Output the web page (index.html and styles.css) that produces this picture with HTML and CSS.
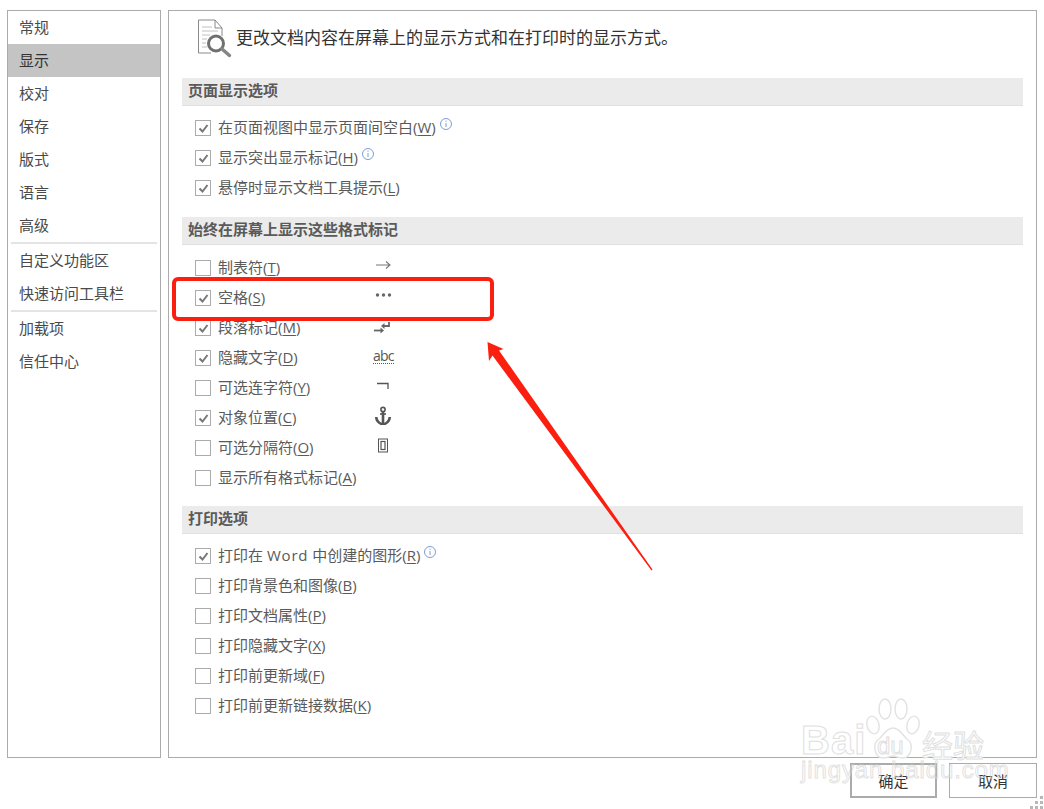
FILE: index.html
```html
<!DOCTYPE html>
<html lang="zh-CN">
<head>
<meta charset="utf-8">
<title>Word 选项 - 显示</title>
<link rel="stylesheet" href="styles.css">
</head>
<body>
<div class="app">
  <div class="panes">
    <nav class="side">
      <div class="nav-item">常规</div>
      <div class="nav-item active">显示</div>
      <div class="nav-item">校对</div>
      <div class="nav-item">保存</div>
      <div class="nav-item">版式</div>
      <div class="nav-item">语言</div>
      <div class="nav-item">高级</div>
      <div class="nav-sep"></div>
      <div class="nav-item">自定义功能区</div>
      <div class="nav-item">快速访问工具栏</div>
      <div class="nav-sep"></div>
      <div class="nav-item">加载项</div>
      <div class="nav-item">信任中心</div>
    </nav>
    <main class="main">
      <header class="head">
        <svg class="head-icon" width="36" height="40" viewBox="0 0 36 40">
          <path d="M1.5 2H18L25 10V18M18 2V10H25M14 35H1.5V2" fill="#fff" stroke="#8a8a8a"/>
          <path d="M5 9H15M5 13H21M5 17H13M5 21H10M5 25H9M5 29H10" stroke="#c0c0c0" fill="none"/>
          <circle cx="19" cy="25.5" r="7.5" fill="#fff" stroke="#707070" stroke-width="3"/>
          <path d="M25 31L32.5 37.5" stroke="#858585" stroke-width="3.4" stroke-linecap="round"/>
        </svg>
        <span class="head-text">更改文档内容在屏幕上的显示方式和在打印时的显示方式。</span>
      </header>

      <h2 class="bar">页面显示选项</h2>
      <div class="opts first">
        <div class="row"><span class="cb on"><svg width="13" height="13" viewBox="0 0 13 13"><path d="M2.5 6.5L5.5 9.5L10.5 3" class="tick"/></svg></span><span class="lbl">在页面视图中显示页面间空白(<u>W</u>)</span><svg class="info" width="14" height="14" viewBox="0 0 14 14"><circle cx="7" cy="7" r="5.5"/><path d="M7 6v4M7 3.6v1.2"/></svg></div>
        <div class="row"><span class="cb on"><svg width="13" height="13" viewBox="0 0 13 13"><path d="M2.5 6.5L5.5 9.5L10.5 3" class="tick"/></svg></span><span class="lbl">显示突出显示标记(<u>H</u>)</span><svg class="info" width="14" height="14" viewBox="0 0 14 14"><circle cx="7" cy="7" r="5.5"/><path d="M7 6v4M7 3.6v1.2"/></svg></div>
        <div class="row"><span class="cb on"><svg width="13" height="13" viewBox="0 0 13 13"><path d="M2.5 6.5L5.5 9.5L10.5 3" class="tick"/></svg></span><span class="lbl">悬停时显示文档工具提示(<u>L</u>)</span></div>
      </div>

      <h2 class="bar gap-a">始终在屏幕上显示这些格式标记</h2>
      <div class="opts second">
        <div class="row"><span class="cb"></span><span class="lbl wide">制表符(<u>T</u>)</span><svg class="sym" width="20" height="14" viewBox="0 0 20 14"><path d="M4 7H18M14 3.5L18 7L14 10.5" fill="none" stroke="#777" stroke-width="1.1"/></svg></div>
        <div class="row"><span class="cb on"><svg width="13" height="13" viewBox="0 0 13 13"><path d="M2.5 6.5L5.5 9.5L10.5 3" class="tick"/></svg></span><span class="lbl wide">空格(<u>S</u>)</span><svg class="sym" width="20" height="14" viewBox="0 0 20 14"><circle cx="5.5" cy="7" r="1.7" fill="#666"/><circle cx="11.5" cy="7" r="1.7" fill="#666"/><circle cx="17.5" cy="7" r="1.7" fill="#666"/></svg></div>
        <div class="row"><span class="cb on"><svg width="13" height="13" viewBox="0 0 13 13"><path d="M2.5 6.5L5.5 9.5L10.5 3" class="tick"/></svg></span><span class="lbl wide">段落标记(<u>M</u>)</span><svg class="sym" width="20" height="20" viewBox="0 0 20 20"><path d="M17 7V11H11" fill="none" stroke="#666" stroke-width="1.8"/><path d="M9 11L12.5 8V14Z" fill="#666"/><path d="M2 15.5H9" fill="none" stroke="#666" stroke-width="1.8"/><path d="M12 15.5L8.5 12.5V18.5Z" fill="#666"/></svg></div>
        <div class="row"><span class="cb on"><svg width="13" height="13" viewBox="0 0 13 13"><path d="M2.5 6.5L5.5 9.5L10.5 3" class="tick"/></svg></span><span class="lbl wide">隐藏文字(<u>D</u>)</span><span class="abc">abc</span></div>
        <div class="row"><span class="cb"></span><span class="lbl wide">可选连字符(<u>Y</u>)</span><svg class="sym" width="20" height="14" viewBox="0 0 20 14"><path d="M5 5.5H16V11" fill="none" stroke="#555" stroke-width="1.3"/></svg></div>
        <div class="row"><span class="cb on"><svg width="13" height="13" viewBox="0 0 13 13"><path d="M2.5 6.5L5.5 9.5L10.5 3" class="tick"/></svg></span><span class="lbl wide">对象位置(<u>C</u>)</span><svg class="sym" width="20" height="20" viewBox="0 0 20 20"><circle cx="11" cy="4.5" r="2.1" fill="none" stroke="#555" stroke-width="1.6"/><path d="M11 6.5V19" stroke="#555" stroke-width="2.6"/><path d="M8 9H14" stroke="#555" stroke-width="1.6"/><path d="M4.2 12C4.5 16 7 18.4 11 19.5C15 18.4 17.5 16 17.8 12" fill="none" stroke="#555" stroke-width="2.6"/></svg></div>
        <div class="row"><span class="cb"></span><span class="lbl wide">可选分隔符(<u>O</u>)</span><svg class="sym" width="20" height="16" viewBox="0 0 20 16"><rect x="6.5" y="2" width="9" height="13" fill="none" stroke="#555"/><rect x="9" y="4.5" width="4" height="8" fill="none" stroke="#555" stroke-width="1.2"/></svg></div>
        <div class="row"><span class="cb"></span><span class="lbl">显示所有格式标记(<u>A</u>)</span></div>
      </div>

      <h2 class="bar gap-b">打印选项</h2>
      <div class="opts first">
        <div class="row"><span class="cb on"><svg width="13" height="13" viewBox="0 0 13 13"><path d="M2.5 6.5L5.5 9.5L10.5 3" class="tick"/></svg></span><span class="lbl">打印在 <span class="latin">Word</span> 中创建的图形(<u>R</u>)</span><svg class="info" width="14" height="14" viewBox="0 0 14 14"><circle cx="7" cy="7" r="5.5"/><path d="M7 6v4M7 3.6v1.2"/></svg></div>
        <div class="row"><span class="cb"></span><span class="lbl">打印背景色和图像(<u>B</u>)</span></div>
        <div class="row"><span class="cb"></span><span class="lbl">打印文档属性(<u>P</u>)</span></div>
        <div class="row"><span class="cb"></span><span class="lbl">打印隐藏文字(<u>X</u>)</span></div>
        <div class="row"><span class="cb"></span><span class="lbl">打印前更新域(<u>F</u>)</span></div>
        <div class="row"><span class="cb"></span><span class="lbl">打印前更新链接数据(<u>K</u>)</span></div>
      </div>
    </main>
  </div>
  <footer class="foot">
    <button class="btn default">确定</button>
    <button class="btn cancel">取消</button>
  </footer>

  <div class="redbox"></div>
  <svg class="arrow" width="180" height="240" viewBox="480 335 180 240">
    <path d="M487.5 342L503.5 349L499 350.5L652.5 569.5L651.5 570.5L492.5 355.5L489 361Z" fill="#fb1f10"/>
  </svg>

  <div class="mark">
    <svg class="paw" width="56" height="62" viewBox="0 0 56 62">
      <g fill="#fff" stroke="#e2e2e2" stroke-width="1.4">
        <ellipse cx="8" cy="27" rx="6" ry="9" transform="rotate(-15 8 27)"/>
        <ellipse cx="20" cy="11" rx="6" ry="10"/>
        <ellipse cx="36" cy="11" rx="6" ry="10"/>
        <ellipse cx="48" cy="27" rx="6" ry="9" transform="rotate(15 48 27)"/>
        <path d="M28 30C21 30 19 37 14 41C7 46 9 60 19 60C23 60 25 58 28 58C31 58 33 60 37 60C47 60 49 46 42 41C37 37 35 30 28 30Z"/>
      </g>
    </svg>
    <span class="mk bai">Bai</span>
    <span class="mk du">du</span>
    <span class="mk jy">经验</span>
    <span class="mk url">jingyan.baidu.com</span>
  </div>
  <svg class="grip" width="14" height="13" viewBox="0 0 14 13">
    <g fill="#b8b8b8"><rect x="10" y="0" width="3" height="3"/><rect x="10" y="5" width="3" height="3"/><rect x="5" y="5" width="3" height="3"/><rect x="10" y="10" width="3" height="3"/><rect x="5" y="10" width="3" height="3"/><rect x="0" y="10" width="3" height="3"/></g>
  </svg>
</div>
</body>
</html>
```
FILE: styles.css
```css
* { box-sizing: border-box; }
html, body { margin: 0; padding: 0; background: #fff; }
body {
  font-family: "Open Sans", "Noto Sans CJK SC", sans-serif;
  font-size: 15px;
  color: #444;
}
.app {
  position: relative;
  width: 1044px;
  height: 809px;
  padding: 10px 7px 0;
  overflow: hidden;
}
.panes {
  display: flex;
  gap: 7px;
  height: 748px;
}
.side {
  width: 154px;
  border: 1px solid #ababab;
  flex: none;
}
.nav-item {
  height: 33px;
  line-height: 33px;
  padding-left: 11px;
  color: #4a4a4a;
}
.nav-item.active {
  background: #c4c4c4;
  color: #333;
}
.nav-sep {
  height: 2px;
  margin: 0 3px;
  background: #e4e4e4;
}
.main {
  flex: 1;
  border: 1px solid #ababab;
}
.head {
  display: flex;
  align-items: flex-start;
  height: 67px;
  padding: 7px 0 0 28px;
}
.head-icon { flex: none; margin-right: 3px; }
.head-text { font-size: 17px; color: #333; line-height: 24px; margin-top: 8px; }
.bar {
  margin: 0 13px;
  height: 28px;
  line-height: 24px;
  padding-left: 6px;
  font-size: 15px;
  font-weight: 700;
  color: #5a5a5a;
  background: #ebebeb;
  border-bottom: 1px solid #e0e0e0;
}
.gap-a { margin-top: 14px; }
.gap-b { margin-top: 13px; }
.opts { padding-left: 26px; }
.opts.first { padding-top: 7px; }
.opts.second { padding-top: 8px; }
.row {
  display: flex;
  align-items: center;
  height: 30px;
}
.cb {
  flex: none;
  width: 16px;
  height: 16px;
  margin-right: 7px;
  border: 1px solid #ababab;
  display: flex;
  align-items: center;
  justify-content: center;
  background: #fff;
}
.tick { fill: none; stroke: #777; stroke-width: 2; }
.lbl { color: #5a5a5a; line-height: 22px; margin-bottom: 2px; }
.lbl u { text-underline-offset: 2px; }
.lbl.wide { width: 154px; flex: none; }
.latin { letter-spacing: 0.8px; }
.info {
  flex: none;
  margin: -8px 0 0 3px;
  fill: none;
  stroke: #7d9ed4;
  stroke-width: 1;
}
.sym { flex: none; margin-top: -6px; }
.abc {
  font-size: 14px;
  letter-spacing: -0.8px;
  line-height: 15px;
  color: #555;
  margin: -4px 0 0 1px;
  border-bottom: 1px dotted #555;
}
.foot {
  display: flex;
  justify-content: flex-end;
  gap: 12px;
  margin-top: 5px;
}
.btn {
  width: 87px;
  height: 35px;
  border: 1px solid #ababab;
  background: #fff;
  font: inherit;
  font-size: 15px;
  color: #333;
  padding: 0;
}
.btn.cancel { width: 88px; }
.btn.default { border: 2px solid #ababab; }
.redbox {
  position: absolute;
  left: 172px;
  top: 277px;
  width: 322px;
  height: 44px;
  border: 4px solid #fb1f10;
  border-radius: 6px;
}
.arrow {
  position: absolute;
  left: 480px;
  top: 335px;
}
.mark {
  position: absolute;
  left: 800px;
  top: 690px;
  width: 200px;
  height: 100px;
}
.paw { position: absolute; left: 65px; top: 8px; }
.mk {
  position: absolute;
  font-family: "Liberation Sans", sans-serif;
  color: #fff;
  -webkit-text-stroke: 1px #e0e0e0;
  white-space: nowrap;
}
.bai { left: 1px; top: 28px; font-size: 40px; letter-spacing: 1px; font-weight: 700; }
.du { left: 77px; top: 42px; font-size: 24px; }
.jy { left: 122px; top: 38px; font-size: 31px; font-family: "Noto Sans CJK SC", sans-serif; line-height: 32px; }
.url { left: 1px; top: 70px; font-size: 24px; line-height: 20px; letter-spacing: 0.9px; color: transparent; -webkit-text-stroke: 1px rgba(215, 215, 215, 0.75); }
.grip {
  position: absolute;
  right: 0;
  bottom: 0;
}
```
